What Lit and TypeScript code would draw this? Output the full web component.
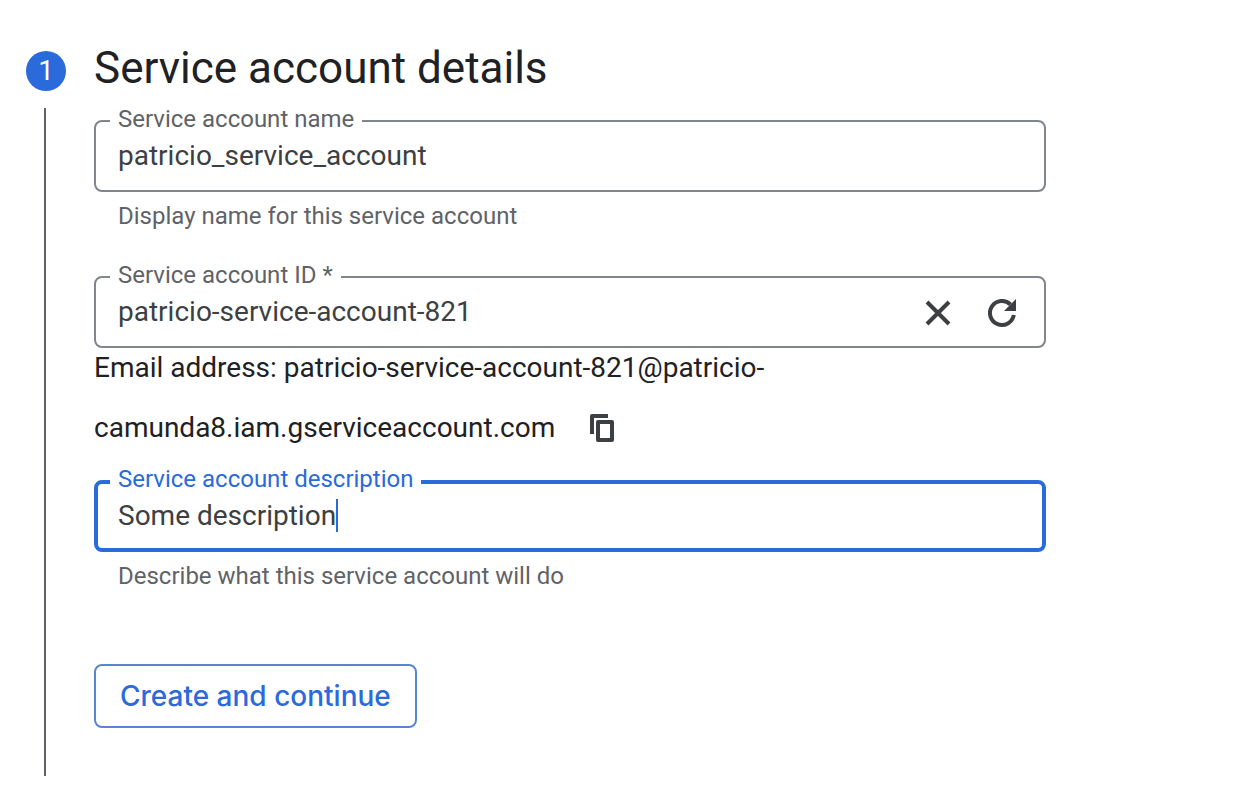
import { LitElement, html, css } from "lit";
import { customElement, property } from "lit/decorators.js";
import { classMap } from "lit/directives/class-map.js";

@customElement("outlined-field")
class OutlinedField extends LitElement {
  @property() label = "";
  @property() value = "";
  @property() hint = "";
  @property({ type: Boolean }) active = false;

  static styles = css`
    :host {
      display: block;
    }
    .box {
      margin: 0;
      min-width: 0;
      padding: 0 22px 9px;
      border: 2px solid #80868b;
      border-radius: 8px;
    }
    .legend {
      margin-left: -8px;
      padding: 0 8px 4px;
      font-size: 24px;
      line-height: 20px;
      color: #5f6368;
    }
    .row {
      display: flex;
      align-items: center;
      height: 48px;
    }
    .input {
      box-sizing: border-box;
      flex: 1;
      min-width: 0;
      height: 44px;
      margin: 0 0 4px;
      padding: 0;
      border: 0;
      outline: 0;
      background: none;
      font: inherit;
      font-size: 28px;
      color: #3c4043;
      caret-color: #2a6adb;
    }
    .box.active {
      border: 4px solid #2a6adb;
      padding: 0 20px 9px;
    }
    .active .legend {
      padding-bottom: 6px;
      color: #2a6adb;
    }
    .active .row {
      height: 44px;
    }
    .active .input {
      flex: none;
      height: 40px;
      field-sizing: content;
      max-width: 100%;
    }
    .caret {
      width: 2px;
      height: 33px;
      margin-bottom: 4px;
      background: #2a6adb;
    }
    .hint {
      margin: 12px 24px 0;
      font-size: 24px;
      line-height: 24px;
      color: #5f6368;
    }
  `;

  render() {
    return html`
      <fieldset class=${classMap({ box: true, active: this.active })}>
        <legend class="legend"><label for="input">${this.label}</label></legend>
        <div class="row">
          <input class="input" id="input" type="text" .value=${this.value} />
          ${this.active ? html`<span class="caret"></span>` : ""}
          <slot></slot>
        </div>
      </fieldset>
      ${this.hint ? html`<p class="hint">${this.hint}</p>` : ""}
    `;
  }
}

@customElement("app-root")
class AppRoot extends LitElement {
  static styles = css`
    :host {
      display: block;
      font-family: Roboto, "Liberation Sans", sans-serif;
      color: #202124;
      background: #fff;
    }
    .page {
      box-sizing: border-box;
      min-height: 100vh;
      padding: 45px 26px 12px;
      display: flex;
      gap: 28px;
    }
    .rail {
      flex: none;
      width: 40px;
      padding-top: 6px;
      display: flex;
      flex-direction: column;
      align-items: center;
      gap: 17px;
    }
    .step {
      width: 40px;
      height: 40px;
      border-radius: 50%;
      background: #2a6adb;
      color: #fff;
      font-size: 28px;
      line-height: 40px;
      text-align: center;
    }
    .line {
      flex: 1;
      width: 2px;
      margin-right: 2px;
      background: #5f6368;
    }
    .content {
      flex: 1;
      min-width: 0;
      max-width: 952px;
    }
    .title {
      margin: 0 0 18px;
      font-size: 44px;
      font-weight: 400;
      line-height: 46px;
    }
    .id-field {
      margin-top: 37px;
    }
    .email {
      margin: -10px 0 11px;
      font-size: 28px;
      line-height: 60px;
    }
    .icon-button {
      padding: 0;
      border: 0;
      background: none;
      color: #3c4043;
      width: 32px;
      height: 32px;
      cursor: pointer;
    }
    .in-field {
      margin-left: 32px;
    }
    .last {
      margin-right: 4px;
    }
    .copy {
      margin: 0 0 4px 24px;
      vertical-align: middle;
    }
    .icon {
      display: block;
      width: 32px;
      height: 32px;
    }
    .create {
      margin-top: 76px;
      height: 64px;
      padding: 0 24px;
      border: 2px solid #5a86d0;
      border-radius: 8px;
      background: #fff;
      color: #2a6adb;
      font-family: Inter, Roboto, sans-serif;
      font-size: 28px;
      font-weight: 500;
    }
  `;

  render() {
    return html`
      <main class="page">
        <div class="rail">
          <div class="step">1</div>
          <div class="line"></div>
        </div>
        <section class="content">
          <h1 class="title">Service account details</h1>
          <outlined-field
            label="Service account name"
            value="patricio_service_account"
            hint="Display name for this service account"
          ></outlined-field>
          <outlined-field class="id-field" label="Service account ID *" value="patricio-service-account-821">
            <button class="icon-button in-field" aria-label="Clear">
              <svg class="icon" viewBox="0 0 32 32" fill="none" stroke="currentColor" stroke-width="4">
                <path d="M5 5L27 27M27 5L5 27" />
              </svg>
            </button>
            <button class="icon-button in-field last" aria-label="Regenerate">
              <svg class="icon" viewBox="0 0 32 32">
                <path d="M27.8 18A12 12 0 1 1 24.5 7.5" fill="none" stroke="currentColor" stroke-width="4" />
                <path d="M30 2V14H18z" fill="currentColor" />
              </svg>
            </button>
          </outlined-field>
          <p class="email">
            Email address: patricio-service-account-821@patricio-camunda8.iam.gserviceaccount.com
            <button class="icon-button copy" aria-label="Copy email address">
              <svg class="icon" viewBox="0 0 32 32" fill="currentColor">
                <path d="M22 2H6a2 2 0 0 0-2 2v18h4V6h14z" />
                <path
                  fill-rule="evenodd"
                  d="M12 8h14a2 2 0 0 1 2 2v18a2 2 0 0 1-2 2H12a2 2 0 0 1-2-2V10a2 2 0 0 1 2-2zm2 4v14h10V12z"
                />
              </svg>
            </button>
          </p>
          <outlined-field
            active
            label="Service account description"
            value="Some description"
            hint="Describe what this service account will do"
          ></outlined-field>
          <button class="create">Create and continue</button>
        </section>
      </main>
    `;
  }
}
